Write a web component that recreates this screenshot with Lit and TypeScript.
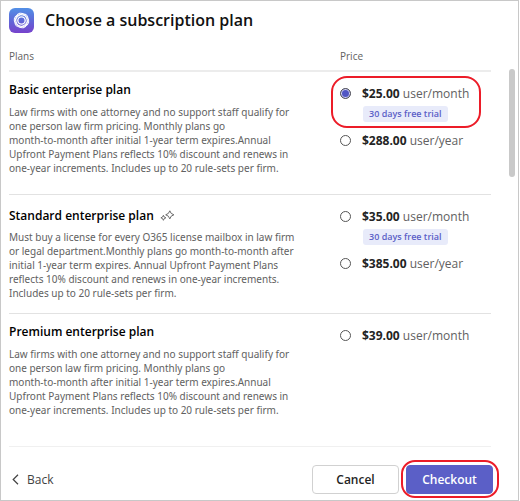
import { LitElement, html, css, svg, nothing } from "lit";
import { customElement, property, state } from "lit/decorators.js";
import { classMap } from "lit/directives/class-map.js";

interface Price {
  id: string;
  amount: string;
  period: string;
  trial?: boolean;
  marked?: boolean;
}

interface Plan {
  name: string;
  lines: string[];
  prices: Price[];
  recommended?: boolean;
  size: "tall" | "short" | "last";
}

const FIRM_TEXT = [
  "Law firms with one attorney and no support staff qualify for",
  "one person law firm pricing. Monthly plans go",
  "month-to-month after initial 1-year term expires.Annual",
  "Upfront Payment Plans reflects 10% discount and renews in",
  "one-year increments. Includes up to 20 rule-sets per firm.",
];

const PLANS: Plan[] = [
  {
    name: "Basic enterprise plan",
    lines: FIRM_TEXT,
    size: "tall",
    prices: [
      { id: "basic-month", amount: "$25.00", period: "user/month", trial: true, marked: true },
      { id: "basic-year", amount: "$288.00", period: "user/year" },
    ],
  },
  {
    name: "Standard enterprise plan",
    recommended: true,
    size: "short",
    lines: [
      "Must buy a license for every O365 license mailbox in law firm",
      "or legal department.Monthly plans go month-to-month after",
      "initial 1-year term expires. Annual Upfront Payment Plans",
      "reflects 10% discount and renews in one-year increments.",
      "Includes up to 20 rule-sets per firm.",
    ],
    prices: [
      { id: "standard-month", amount: "$35.00", period: "user/month", trial: true },
      { id: "standard-year", amount: "$385.00", period: "user/year" },
    ],
  },
  {
    name: "Premium enterprise plan",
    lines: FIRM_TEXT,
    size: "last",
    prices: [{ id: "premium-month", amount: "$39.00", period: "user/month" }],
  },
];

const logo = html`<svg class="logo" viewBox="0 0 25 25" aria-hidden="true">
  <defs>
    <linearGradient id="tile" x1="0" y1="0" x2="0" y2="1">
      <stop offset="0" stop-color="#5290e6" />
      <stop offset="0.5" stop-color="#5f68d8" />
      <stop offset="1" stop-color="#7742cc" />
    </linearGradient>
  </defs>
  <rect width="25" height="25" rx="6" fill="url(#tile)" />
  <g fill="none" stroke="#fff" stroke-width="1">
    ${[0, 60, 120].map(
      (a) => svg`<ellipse cx="12.5" cy="12.5" rx="7.4" ry="5.6" transform=${`rotate(${a + 15} 12.5 12.5)`} />`
    )}
    <circle cx="12.5" cy="12.5" r="3.7" stroke-width="1.3" />
  </g>
</svg>`;

const sparkle = html`<svg class="sparkle" viewBox="0 0 15 12" aria-hidden="true">
  <g fill="none" stroke="#6a6a6a" stroke-width="1" stroke-linejoin="round">
    <path d="M9.8 0.8 L11.2 3.4 L13.9 4.8 L11.2 6.2 L9.8 8.9 L8.4 6.2 L5.7 4.8 L8.4 3.4 Z" />
    <path d="M3.4 5.3 L4.2 7 L5.9 7.8 L4.2 8.6 L3.4 10.3 L2.6 8.6 L0.9 7.8 L2.6 7 Z" />
  </g>
</svg>`;

@customElement("price-option")
class PriceOption extends LitElement {
  @property({ attribute: false }) price!: Price;
  @property({ type: Boolean }) checked = false;

  static styles = css`
    :host {
      display: block;
    }
    .option {
      position: relative;
      display: flex;
      gap: 11px;
    }
    .marked::after {
      content: "";
      position: absolute;
      inset: -9px 10px -6px -9px;
      border: 2px solid #ec1c28;
      border-radius: 16px;
      pointer-events: none;
    }
    input {
      appearance: none;
      flex: none;
      width: 11px;
      height: 11px;
      margin: 3px 0 0;
      border: 1px solid #555;
      border-radius: 50%;
      background: #fff;
    }
    input:checked {
      background: #5156c4;
      box-shadow: inset 0 0 0 1px #d8d9f2;
    }
    label {
      display: flex;
      flex-direction: column;
      align-items: flex-start;
      gap: 3px;
      font-size: 12px;
      line-height: 18px;
      color: #616161;
      white-space: nowrap;
    }
    b {
      font-weight: 700;
      color: #242424;
    }
    .badge {
      margin-left: 1px;
      padding: 0 6px;
      border-radius: 3px;
      background: #e8ebfa;
      color: #5b5fc7;
      font-size: 9px;
      font-weight: 600;
      line-height: 16px;
    }
  `;

  private pick() {
    this.dispatchEvent(new CustomEvent("pick", { detail: this.price.id }));
  }

  render() {
    const p = this.price;
    return html`<div class=${classMap({ option: true, marked: !!p.marked })}>
      <input type="radio" id=${p.id} name="price" .checked=${this.checked} @change=${this.pick} />
      <label for=${p.id}>
        <span><b>${p.amount}</b> ${p.period}</span>
        ${p.trial ? html`<span class="badge">30 days free trial</span>` : nothing}
      </label>
    </div>`;
  }
}

@customElement("app-root")
class AppRoot extends LitElement {
  @state() private selected = "basic-month";

  static styles = css`
    :host {
      display: block;
      font-family: "Open Sans", "Noto Sans", sans-serif;
      color: #242424;
    }
    .dialog {
      box-sizing: border-box;
      display: flex;
      flex-direction: column;
      min-height: 100vh;
      margin-right: 1px;
      border: 1px solid #c8c8c8;
      background: #fff;
    }
    header {
      display: flex;
      align-items: center;
      gap: 11px;
      padding: 6px 8px 0;
    }
    .logo {
      width: 25px;
      height: 25px;
    }
    h1 {
      margin: 0;
      font-size: 16px;
      font-weight: 600;
      line-height: 26px;
      color: #111;
    }
    .list {
      position: relative;
      margin-top: 15px;
      padding: 0 27px 0 8px;
    }
    .thumb {
      position: absolute;
      top: 21px;
      right: 3px;
      width: 6px;
      height: 108px;
      border-radius: 3px;
      background: #c9c9c9;
    }
    table {
      width: 100%;
      border-collapse: separate;
      border-spacing: 0;
    }
    th,
    td {
      padding: 0;
      border-bottom: 1px solid #e2e2e2;
      text-align: left;
      vertical-align: top;
      font-weight: 400;
    }
    thead th {
      padding-bottom: 5px;
      border-bottom-width: 2px;
      border-color: #ececec;
      font-size: 10px;
      line-height: 17px;
      color: #616161;
    }
    .price {
      width: 151px;
    }
    tbody th {
      padding-top: 9px;
    }
    td {
      padding-top: 13px;
    }
    .tall th {
      padding-bottom: 19px;
    }
    .short th {
      padding-top: 12px;
      padding-bottom: 13px;
    }
    .last th {
      padding-bottom: 29px;
    }
    .last th,
    .last td {
      border-color: #f0f0f0;
    }
    h2 {
      display: flex;
      align-items: center;
      gap: 6px;
      margin: 0 0 6px;
      font-size: 12px;
      font-weight: 600;
      line-height: 18px;
      color: #000;
    }
    .short h2 {
      margin-bottom: 5px;
    }
    .sparkle {
      width: 15px;
      height: 12px;
    }
    p {
      margin: 0;
      font-family: "Noto Sans", "Open Sans", sans-serif;
      font-size: 10px;
      line-height: 14px;
      color: #616161;
      white-space: nowrap;
    }
    .options {
      display: flex;
      flex-direction: column;
      gap: 10px;
    }
    footer {
      display: flex;
      align-items: center;
      gap: 7px;
      margin-top: auto;
      padding: 0 25px 6px 11px;
    }
    button {
      box-sizing: border-box;
      width: 87px;
      height: 29px;
      padding: 0;
      border: 1px solid #d1d1d1;
      border-radius: 4px;
      background: #fff;
      color: #242424;
      font: 600 12px/18px "Open Sans", "Noto Sans", sans-serif;
    }
    .back {
      display: flex;
      align-items: center;
      gap: 8px;
      width: auto;
      margin-right: auto;
      border: 0;
      background: none;
      color: #424242;
      font-weight: 400;
    }
    .back svg {
      width: 7px;
      height: 11px;
    }
    .checkout {
      position: relative;
      border-color: #5b5fc7;
      background: #5b5fc7;
      color: #fff;
    }
    .checkout::after {
      content: "";
      position: absolute;
      inset: -6px -7px -5px -6px;
      border: 2px solid #ec1c28;
      border-radius: 14px;
    }
  `;

  private renderPlan(plan: Plan) {
    return html`<tr class=${plan.size}>
      <th scope="row">
        <h2>${plan.name}${plan.recommended ? sparkle : nothing}</h2>
        <p>${plan.lines.map((line, i) => (i ? html`<br />${line}` : line))}</p>
      </th>
      <td>
        <div class="options">
          ${plan.prices.map(
            (price) => html`<price-option
              .price=${price}
              .checked=${this.selected === price.id}
              @pick=${(e: CustomEvent<string>) => (this.selected = e.detail)}
            ></price-option>`
          )}
        </div>
      </td>
    </tr>`;
  }

  render() {
    return html`<main class="dialog">
      <header>
        ${logo}
        <h1>Choose a subscription plan</h1>
      </header>
      <section class="list">
        <table>
          <thead>
            <tr>
              <th scope="col">Plans</th>
              <th scope="col" class="price">Price</th>
            </tr>
          </thead>
          <tbody>
            ${PLANS.map((plan) => this.renderPlan(plan))}
          </tbody>
        </table>
        <div class="thumb"></div>
      </section>
      <footer>
        <button class="back" type="button">
          <svg viewBox="0 0 7 11" aria-hidden="true">
            <path d="M6 0.8 L1.2 5.5 L6 10.2" fill="none" stroke="#424242" stroke-width="1.2" />
          </svg>
          Back
        </button>
        <button type="button">Cancel</button>
        <button class="checkout" type="button">Checkout</button>
      </footer>
    </main>`;
  }
}
